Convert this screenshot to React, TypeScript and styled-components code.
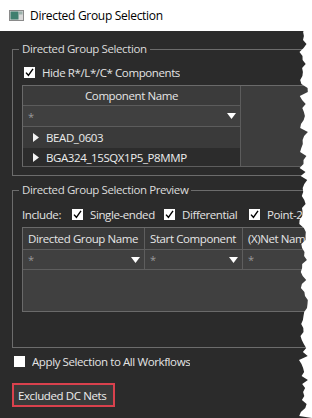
import styled, { createGlobalStyle } from "styled-components";

const GlobalStyle = createGlobalStyle`
  html, body {
    margin: 0;
    padding: 0;
    background: #ffffff;
  }
  * {
    box-sizing: border-box;
  }
`;

const FONT = `"Open Sans", "Noto Sans", "Liberation Sans", sans-serif`;

const Window = styled.div`
  position: relative;
  width: 312px;
  height: 418px;
  overflow: hidden;
  background: #2b2b2b;
  font-family: ${FONT};
  font-size: 11.5px;
  letter-spacing: -0.4px;
  color: #e4e4e4;
`;

const TitleBar = styled.div`
  height: 31px;
  background: #ffffff;
  color: #000000;
  display: flex;
  align-items: center;
  gap: 6px;
  padding-left: 9px;
  font-size: 12px;
  letter-spacing: -0.3px;
`;

const Body = styled.div`
  width: 380px;
  padding: 10px 0 0 12px;
  display: flex;
  flex-direction: column;
`;

const Group = styled.fieldset<{ $pb: number; $mt?: number }>`
  margin: ${(p) => p.$mt ?? 0}px 0 0 0;
  padding: 0 0 ${(p) => p.$pb}px 9px;
  border: 1px solid #6c6c6c;
  min-width: 0;
`;

const Legend = styled.legend`
  margin-left: -3px;
  padding: 0 3px;
  line-height: 16px;
  color: #dcdcdc;
`;

const Row = styled.div<{ $mt: number; $ml?: number }>`
  display: flex;
  align-items: center;
  height: 16px;
  margin-top: ${(p) => p.$mt}px;
  margin-left: ${(p) => p.$ml ?? 0}px;
  white-space: nowrap;
`;

const BoxLabel = styled.span<{ $w?: number }>`
  margin-left: 7px;
  overflow: hidden;
  ${(p) => (p.$w ? `width: ${p.$w}px;` : "")}
`;

const IncludeLabel = styled.span`
  width: 50px;
`;

const Gap = styled.span<{ $w: number }>`
  display: inline-block;
  width: ${(p) => p.$w}px;
`;

const Table1 = styled.div`
  margin-top: 5px;
  display: flex;
  background: #3d3d3d;
  border-top: 1px solid #6a6a6a;
  border-left: 1px solid #6a6a6a;
  border-bottom: 1px solid #5e5e5e;
`;

const Column = styled.div`
  width: 218px;
  border-right: 1px solid #5c5c5c;
  display: flex;
  flex-direction: column;
`;

const HeadCell = styled.div<{ $center?: boolean }>`
  height: 20px;
  display: flex;
  align-items: center;
  justify-content: ${(p) => (p.$center ? "center" : "flex-start")};
  padding: 0 6px;
  background: #3b3b3b;
  border-bottom: 1px solid #5c5c5c;
  color: #e6e6e6;
  white-space: nowrap;
  overflow: hidden;
`;

const FilterCell = styled.div`
  height: 21px;
  display: flex;
  align-items: center;
  justify-content: space-between;
  padding: 0 4px 0 5px;
  background: #404040;
  border-bottom: 1px solid #5c5c5c;
  color: #9a9a9a;
  font-size: 11px;
`;

const TreeRow = styled.div<{ $dark?: boolean; $h: number }>`
  height: ${(p) => p.$h}px;
  display: flex;
  align-items: center;
  gap: 7px;
  padding-left: 10px;
  background: ${(p) => (p.$dark ? "#2c2c2c" : "#3a3a3a")};
  color: #ececec;
  white-space: nowrap;
  overflow: hidden;
`;

const Table2 = styled.div`
  margin-top: 5px;
  display: grid;
  grid-template-columns: 122px 98px 1fr;
  grid-template-rows: 22px 20px 41px;
  background: #404040;
  border-top: 1px solid #6a6a6a;
  border-left: 1px solid #6a6a6a;
  border-bottom: 1px solid #6a6a6a;
`;

const Cell2 = styled.div<{ $filter?: boolean }>`
  display: flex;
  align-items: center;
  justify-content: space-between;
  padding: ${(p) => (p.$filter ? "0 4px 0 5px" : "0 5px")};
  background: ${(p) => (p.$filter ? "#404040" : "#3a3a3a")};
  border-right: 1px solid #5e5e5e;
  border-bottom: 1px solid #5e5e5e;
  color: ${(p) => (p.$filter ? "#9a9a9a" : "#e6e6e6")};
  font-size: ${(p) => (p.$filter ? "11px" : "11.5px")};
  white-space: nowrap;
  overflow: hidden;
`;

const Empty = styled.div`
  grid-column: 1 / -1;
  background: #404040;
`;

const Button = styled.button`
  margin-top: 14px;
  width: 103px;
  height: 24px;
  border: 2px solid #d9414d;
  background: #3a3a3a;
  color: #ededed;
  font-family: ${FONT};
  font-size: 11.5px;
  letter-spacing: -0.4px;
  white-space: nowrap;
  text-align: left;
  padding: 0 0 0 4px;
`;

const Tear = styled.svg`
  position: absolute;
  top: 0;
  right: 0;
`;

const TitleIcon = () => (
  <svg width="15" height="11" viewBox="0 0 15 11">
    <rect x="0.5" y="0.5" width="14" height="10" fill="#d8d8d8" stroke="#8a8a8a" />
    <rect x="1.5" y="1.5" width="8" height="8" fill="#3f7f6f" />
    <rect x="10" y="1.5" width="3.5" height="3" fill="#9ab0aa" />
  </svg>
);

const CheckBox = ({ checked }: { checked: boolean }) => (
  <svg width="11" height="11" viewBox="0 0 11 11">
    <rect x="0" y="0" width="11" height="11" fill="#ffffff" />
    {checked && (
      <path d="M2 5.6 L4.4 8.3 L9 1.8" fill="none" stroke="#000000" strokeWidth="1.4" />
    )}
  </svg>
);

const DownArrow = () => (
  <svg width="9" height="6" viewBox="0 0 9 6">
    <path d="M0 0 H9 L4.5 6 Z" fill="#ffffff" />
  </svg>
);

const RightArrow = () => (
  <svg width="6" height="9" viewBox="0 0 6 9">
    <path d="M0 0 L6 4.5 L0 9 Z" fill="#f2f2f2" />
  </svg>
);

const tearPoints = () => {
  const pts: string[] = ["16,0"];
  let seed = 7;
  for (let y = 0; y <= 418; y += 4) {
    seed = (seed * 9301 + 49297) % 233280;
    const r = seed / 233280;
    const x = 3 + r * 7 + (y % 24 < 12 ? 0 : 2);
    pts.push(`${x.toFixed(1)},${y}`);
  }
  pts.push("16,418");
  return pts.join(" ");
};

const App = () => {
  return (
    <>
      <GlobalStyle />
      <Window>
        <TitleBar>
          <TitleIcon />
          <span>Directed Group Selection</span>
        </TitleBar>
        <Body>
          <Group $pb={8}>
            <Legend>Directed Group Selection</Legend>
            <Row $mt={7} $ml={2}>
              <CheckBox checked />
              <BoxLabel>Hide R*/L*/C* Components</BoxLabel>
            </Row>
            <Table1>
              <Column>
                <HeadCell $center>Component Name</HeadCell>
                <FilterCell>
                  <span>*</span>
                  <DownArrow />
                </FilterCell>
                <TreeRow $h={21}>
                  <RightArrow />
                  <span>BEAD_0603</span>
                </TreeRow>
                <TreeRow $h={18} $dark>
                  <RightArrow />
                  <span>BGA324_15SQX1P5_P8MMP</span>
                </TreeRow>
              </Column>
            </Table1>
          </Group>

          <Group $pb={35} $mt={6}>
            <Legend>Directed Group Selection Preview</Legend>
            <Row $mt={8}>
              <IncludeLabel>Include:</IncludeLabel>
              <CheckBox checked />
              <BoxLabel $w={66}>Single-ended</BoxLabel>
              <Gap $w={8} />
              <CheckBox checked />
              <BoxLabel $w={62}>Differential</BoxLabel>
              <Gap $w={5} />
              <CheckBox checked />
              <BoxLabel>Point-2-Point</BoxLabel>
            </Row>
            <Table2>
              <Cell2>Directed Group Name</Cell2>
              <Cell2>Start Component</Cell2>
              <Cell2>(X)Net Name</Cell2>
              <Cell2 $filter>
                <span>*</span>
                <DownArrow />
              </Cell2>
              <Cell2 $filter>
                <span>*</span>
                <DownArrow />
              </Cell2>
              <Cell2 $filter>
                <span>*</span>
              </Cell2>
              <Empty />
            </Table2>
          </Group>

          <Row $mt={5} $ml={2}>
            <CheckBox checked={false} />
            <BoxLabel>Apply Selection to All Workflows</BoxLabel>
          </Row>
          <div>
            <Button>Excluded DC Nets</Button>
          </div>
        </Body>
        <Tear width="16" height="418" viewBox="0 0 16 418">
          <polygon points={tearPoints()} fill="#ffffff" />
        </Tear>
      </Window>
    </>
  );
};

export default App;
